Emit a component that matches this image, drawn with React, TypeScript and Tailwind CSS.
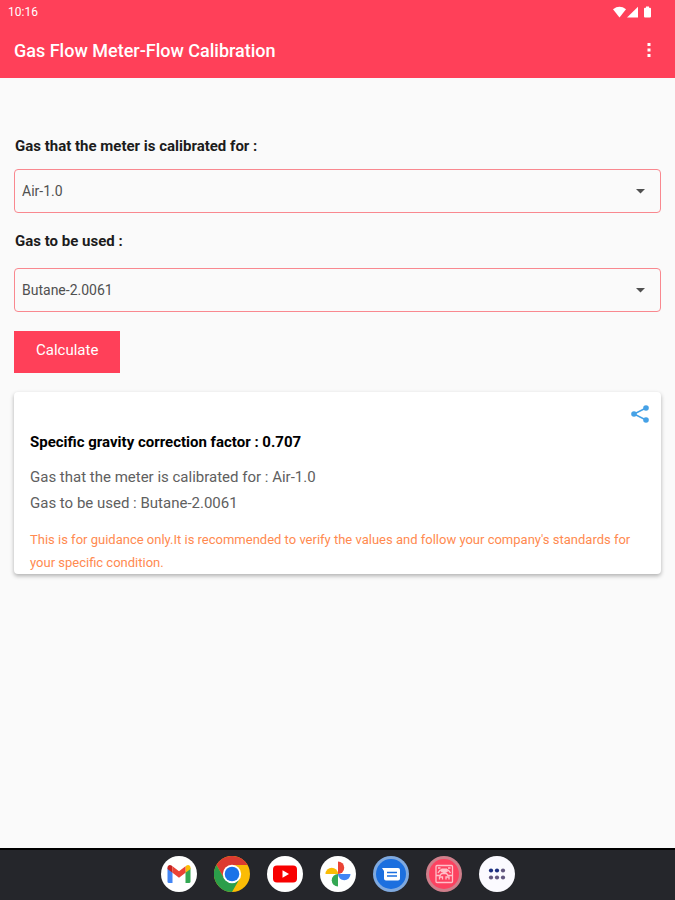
import React, { useState } from 'react';

interface Gas {
  name: string;
  gravity: string;
}

interface GasSelectProps {
  id: string;
  label: string;
  labelClass: string;
  value: string;
  onChange: (value: string) => void;
}

const GASES: Gas[] = [
  { name: 'Air', gravity: '1.0' },
  { name: 'Butane', gravity: '2.0061' },
];

const toLabel = (gas: Gas) => `${gas.name}-${gas.gravity}`;

const gravityOf = (label: string) => {
  const gas = GASES.find((g) => toLabel(g) === label);
  return gas ? Number(gas.gravity) : 1;
};

const getFactor = (calibrated: string, used: string) =>
  Math.sqrt(gravityOf(calibrated) / gravityOf(used));

// always round the last digit up
const formatFactor = (factor: number) => (Math.ceil(factor * 1000) / 1000).toFixed(3);

const StatusBar: React.FC = () => (
  <div className="flex h-6 items-center justify-between pl-2 pr-6">
    <span className="text-xs">10:16</span>
    <svg className="h-3 w-[38px]" viewBox="0 0 38 12" fill="currentColor" aria-hidden="true">
      <path d="M0 3.2Q6.500-1.600 13 3.200L6.500 11.500Z" />
      <path d="M25 .8V11.500H14Z" />
      <path d="M33 .5h3v1.200h1q1 0 1 1v7.800q0 1-1 1h-5q-1 0-1-1V2.700q0-1 1-1h1Z" />
    </svg>
  </div>
);

const GasSelect: React.FC<GasSelectProps> = ({ id, label, labelClass, value, onChange }) => (
  <div>
    <label htmlFor={id} className={`block pl-px text-[15px] font-bold leading-5 text-[#1c1c1c] ${labelClass}`}>
      {label} :
    </label>
    <div className="relative">
      <select
        id={id}
        value={value}
        onChange={(e) => onChange(e.target.value)}
        className="block h-11 w-full appearance-none rounded-sm border border-[#f9888f] bg-transparent pl-[7px] pr-10 text-sm text-[#505050]"
      >
        {GASES.map((gas) => (
          <option key={gas.name}>{toLabel(gas)}</option>
        ))}
      </select>
      <svg
        className="pointer-events-none absolute right-4 top-5 h-[5px] w-[9px] text-[#505050]"
        viewBox="0 0 9 5"
        fill="currentColor"
        aria-hidden="true"
      >
        <path d="M0 0h9L4.500 4.600Z" />
      </svg>
    </div>
  </div>
);

const GmailIcon: React.FC = () => (
  <svg viewBox="0 0 36 36" className="h-9 w-9">
    <circle cx="18" cy="18" r="18" fill="#fff" />
    <path d="M6.500 12v13.500q0 1.500 1.500 1.500h3.500V15.500Z" fill="#4285f4" />
    <path d="M24.500 15.500V27H28q1.500 0 1.500-1.500V12Z" fill="#34a853" />
    <path d="M24.500 10.500v6.300l5-3.800v-1.500c0-2.400-2.500-3.200-4-2Z" fill="#fbbc04" />
    <path d="M11.500 10.500v6.300l-5-3.800v-1.500c0-2.400 2.500-3.200 4-2Z" fill="#c5221f" />
    <path d="M11.500 10.300 18 15.200l6.500-4.900v6.500L18 21.700l-6.500-4.900Z" fill="#ea4335" />
  </svg>
);

const ChromeIcon: React.FC = () => (
  <svg viewBox="0 0 36 36" className="h-9 w-9">
    <circle cx="18" cy="18" r="18" fill="#fbbc05" />
    <path d="M2.400 9A18 18 0 0 1 33.600 9H18L10.200 22.500Z" fill="#dc3b30" />
    <path d="M2.400 9A18 18 0 0 0 18 36L25.800 22.500 18 18 10.200 22.500Z" fill="#2b9e4a" />
    <circle cx="18" cy="18" r="9.200" fill="#fff" />
    <circle cx="18" cy="18" r="7.300" fill="#1a73e8" />
  </svg>
);

const YoutubeIcon: React.FC = () => (
  <svg viewBox="0 0 36 36" className="h-9 w-9">
    <circle cx="18" cy="18" r="18" fill="#fff" />
    <rect x="6" y="9.500" width="24" height="17" rx="4" fill="#f80000" />
    <path d="M15.500 14.200v7.600L22 18Z" fill="#fff" />
  </svg>
);

const PhotosIcon: React.FC = () => (
  <svg viewBox="0 0 36 36" className="h-9 w-9">
    <circle cx="18" cy="18" r="18" fill="#fff" />
    <path d="M18 5.500a6.200 6.200 0 0 1 0 12.500Z" fill="#ea4335" />
    <path d="M30.500 18a6.200 6.200 0 0 1-12.500 0Z" fill="#4285f4" />
    <path d="M18 30.500A6.200 6.200 0 0 1 18 18Z" fill="#34a853" />
    <path d="M5.500 18A6.200 6.200 0 0 1 18 18Z" fill="#fbbc04" />
  </svg>
);

const MessagesIcon: React.FC = () => (
  <svg viewBox="0 0 36 36" className="h-9 w-9">
    <circle cx="18" cy="18" r="18" fill="#7fa9df" />
    <circle cx="18" cy="18" r="15" fill="#1b6fdf" />
    <path d="M9 12h16q2 0 2 2v8.500q0 2-2 2H13q-2 0-2-2v-7.500Z" fill="#fff" />
    <path d="M14 16.500h10M14 20h10" stroke="#1b6fdf" strokeWidth="1.300" />
  </svg>
);

const MeterIcon: React.FC = () => (
  <svg viewBox="0 0 36 36" className="h-9 w-9">
    <circle cx="18" cy="18" r="18" fill="#cf7f8b" />
    <circle cx="18" cy="18" r="15" fill="#fd4260" />
    <g fill="none" stroke="#ffc0c9" strokeWidth="1.300">
      <rect x="10" y="9.500" width="16.500" height="17" rx="1" />
      <path d="M10 19.500h4l1.500-2h5l1.500 2h4.500M12 17q1.500-3 4-3.500M24.500 17q-1.500-3-4-3.500M12 12h2.500M22 12h2.500" />
      <path d="M13.500 23.500v-2.500h3v2.500M20 23.500v-2.500h3v2.500" />
    </g>
    <path d="M15.500 12.500h5.500l1 3-3.700 2-3.700-2Z" fill="#ffc0c9" />
  </svg>
);

const AppsIcon: React.FC = () => (
  <svg viewBox="0 0 36 36" className="h-9 w-9">
    <circle cx="18" cy="18" r="18" fill="#fbfaff" />
    <g fill="#1c2f80">
      <circle cx="12" cy="14.500" r="2.100" />
      <circle cx="18" cy="14.500" r="2.100" />
    </g>
    <g fill="#62577f">
      <circle cx="24" cy="14.500" r="2.100" />
      <circle cx="12" cy="21.500" r="2.100" />
      <circle cx="18" cy="21.500" r="2.100" />
      <circle cx="24" cy="21.500" r="2.100" />
    </g>
  </svg>
);

const DOCK = [
  { label: 'Gmail', Icon: GmailIcon },
  { label: 'Chrome', Icon: ChromeIcon },
  { label: 'YouTube', Icon: YoutubeIcon },
  { label: 'Photos', Icon: PhotosIcon },
  { label: 'Messages', Icon: MessagesIcon },
  { label: 'Gas Flow Meter', Icon: MeterIcon },
  { label: 'All apps', Icon: AppsIcon },
];

const App: React.FC = () => {
  const [calibrated, setCalibrated] = useState('Air-1.0');
  const [used, setUsed] = useState('Butane-2.0061');
  const [result, setResult] = useState({ calibrated: 'Air-1.0', used: 'Butane-2.0061' });

  const handleSubmit = (e: React.FormEvent) => {
    e.preventDefault();
    setResult({ calibrated, used });
  };

  return (
    <div className="flex min-h-screen flex-col bg-[#fafafa] font-['Roboto',sans-serif]">
      <header className="bg-[#ff4059] text-white">
        <StatusBar />
        <div className="flex h-[54px] items-center justify-between pl-3.5 pr-4">
          <h1 className="text-lg font-medium">Gas Flow Meter-Flow Calibration</h1>
          <button type="button" aria-label="More options" className="flex h-8 w-5 items-center justify-center pb-0.5">
            <svg viewBox="0 0 4 16" className="h-4 w-1" fill="currentColor" aria-hidden="true">
              <path d="M.500 1h3v3h-3ZM.500 6.500h3v3h-3ZM.500 12h3v3h-3Z" />
            </svg>
          </button>
        </div>
      </header>

      <main className="flex-1 px-3.5 pt-[58px]">
        <form onSubmit={handleSubmit}>
          <div className="space-y-[18px]">
            <GasSelect
              id="calibrated-gas"
              label="Gas that the meter is calibrated for"
              labelClass="mb-[13px]"
              value={calibrated}
              onChange={setCalibrated}
            />
            <GasSelect
              id="used-gas"
              label="Gas to be used"
              labelClass="mb-[17px]"
              value={used}
              onChange={setUsed}
            />
          </div>
          <button type="submit" className="mt-[19px] h-[42px] bg-[#ff4059] px-[22px] pb-1 text-[15px] text-white">
            Calculate
          </button>
        </form>

        {/* Result card */}
        <section className="mt-[19px] rounded-sm bg-white px-4 shadow-[0_2px_4px_rgba(0,0,0,0.3)]">
          <div className="-mr-1 flex justify-end pt-3">
            <button type="button" aria-label="Share" className="text-[#45a1e6]">
              <svg viewBox="0 0 18 20" className="h-5 w-[18px]" aria-hidden="true">
                <path d="M15 4 3 10l12 6" fill="none" stroke="currentColor" strokeWidth="1.500" />
                <g fill="currentColor">
                  <circle cx="15" cy="4" r="2.800" />
                  <circle cx="3" cy="10" r="2.800" />
                  <circle cx="15" cy="16" r="2.800" />
                </g>
              </svg>
            </button>
          </div>
          <h2 className="mt-2 text-[15px] font-bold leading-5 text-black">
            Specific gravity correction factor : {formatFactor(getFactor(result.calibrated, result.used))}
          </h2>
          <div className="mt-3 text-[15px] leading-[26px] text-[#606060]">
            <p>Gas that the meter is calibrated for : {result.calibrated}</p>
            <p>Gas to be used : {result.used}</p>
          </div>
          <p className="mt-3 text-[13px] leading-[23px] text-[#ff8a50]">
            This is for guidance only.It is recommended to verify the values and follow your company's standards for
            your specific condition.
          </p>
        </section>
      </main>

      <nav className="flex h-[52px] items-center justify-center gap-[17px] border-t-2 border-black bg-[#25262b] pb-0.5">
        {DOCK.map(({ label, Icon }) => (
          <button key={label} type="button" aria-label={label}>
            <Icon />
          </button>
        ))}
      </nav>
    </div>
  );
};

export default App;
